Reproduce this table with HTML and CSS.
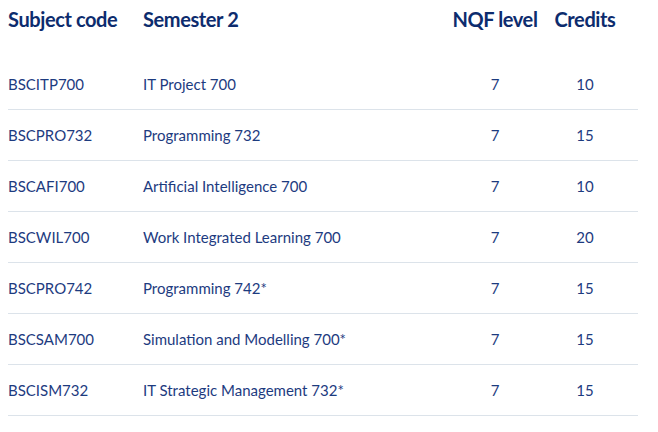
FILE: index.html
```html
<!DOCTYPE html>
<html lang="en">
<head>
  <meta charset="UTF-8">
  <meta name="viewport" content="width=658, initial-scale=1.0">
  <title>Semester 2 subjects</title>
  <link rel="stylesheet" href="styles.css">
</head>
<body>
  <!-- Subject table for semester 2 -->
  <table class="subjects">
    <colgroup>
      <col class="col-code">
      <col class="col-name">
      <col class="col-nqf">
      <col class="col-credits">
    </colgroup>
    <thead>
      <tr>
        <th>Subject code</th>
        <th>Semester 2</th>
        <th class="num">NQF level</th>
        <th class="num">Credits</th>
      </tr>
    </thead>
    <tbody>
      <tr>
        <td>BSCITP700</td>
        <td>IT Project 700</td>
        <td class="num">7</td>
        <td class="num">10</td>
      </tr>
      <tr>
        <td>BSCPRO732</td>
        <td>Programming 732</td>
        <td class="num">7</td>
        <td class="num">15</td>
      </tr>
      <tr>
        <td>BSCAFI700</td>
        <td>Artificial Intelligence 700</td>
        <td class="num">7</td>
        <td class="num">10</td>
      </tr>
      <tr>
        <td>BSCWIL700</td>
        <td>Work Integrated Learning 700</td>
        <td class="num">7</td>
        <td class="num">20</td>
      </tr>
      <tr>
        <td>BSCPRO742</td>
        <td>Programming 742*</td>
        <td class="num">7</td>
        <td class="num">15</td>
      </tr>
      <tr>
        <td>BSCSAM700</td>
        <td>Simulation and Modelling 700*</td>
        <td class="num">7</td>
        <td class="num">15</td>
      </tr>
      <tr>
        <td>BSCISM732</td>
        <td>IT Strategic Management 732*</td>
        <td class="num">7</td>
        <td class="num">15</td>
      </tr>
    </tbody>
  </table>
</body>
</html>
```

FILE: styles.css
```css
/* Page basics */
html, body {
  margin: 0;
  padding: 0;
  background: #fff;
  font-family: Lato, 'Open Sans', Arial, sans-serif;
  color: #1d3b7f;
}
body {
  padding: 0 20px 0 8px;
}
/* Table */
.subjects {
  width: 630px;
  border-collapse: collapse;
  table-layout: fixed;
}
.col-code { width: 135px; }
.col-name { width: 302px; }
.col-nqf { width: 100px; }
.col-credits { width: 93px; }

.subjects th {
  font-size: 20px;
  font-weight: 700;
  color: #0d2c6e;
  text-align: left;
  padding: 0 0 2px 0;
  height: 37px;
  vertical-align: middle;
  letter-spacing: -0.4px;
}
.subjects td {
  font-size: 15px;
  padding: 0;
  height: 50px;
  border-bottom: 1px solid #dce3ea;
  vertical-align: middle;
}
/* first row sits lower, away from the header */
.subjects tbody tr:first-child td {
  padding-top: 20px;
}
.subjects .num {
  text-align: center;
  padding-right: 13px;
}
.subjects th.num:nth-child(3),
.subjects td.num:nth-child(3) {
  padding-right: 0;
}
```
